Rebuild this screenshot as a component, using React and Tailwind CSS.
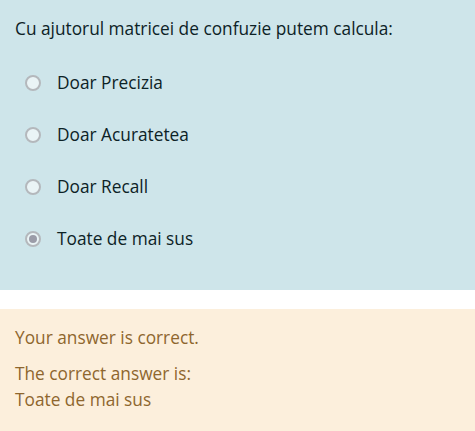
import React from "react";

const options = [
    { label: "Doar Precizia", checked: false },
    { label: "Doar Acuratetea", checked: false },
    { label: "Doar Recall", checked: false },
    { label: "Toate de mai sus", checked: true },
];

const Radio = ({ checked }) => (
    <span className="w-[16px] h-[16px] rounded-full border-2 border-[#b4b8bc] bg-[#eaf4f6] flex items-center justify-center shrink-0">
        {checked && <span className="w-[8px] h-[8px] rounded-full bg-[#9b9ca8]" />}
    </span>
);

const App = () => {
    return (
        <div className="w-[475px] h-[431px] bg-white overflow-hidden font-['Open_Sans',sans-serif] text-[17.3px] leading-[26px]">
            <div className="bg-[#cee5ea] text-[#0c2226] h-[290px] px-[15px] pt-[16px]">
                <div>Cu ajutorul matricei de confuzie putem calcula:</div>
                <div className="mt-[15px] flex flex-col">
                    {options.map((o) => (
                        <label key={o.label} className="h-[52px] flex items-center pl-[10px]">
                            <Radio checked={o.checked} />
                            <span className="ml-[16px]">{o.label}</span>
                        </label>
                    ))}
                </div>
            </div>
            <div className="mt-[19px] bg-[#fcefdc] text-[#8e662e] px-[15px] pt-[16px] pb-[18px]">
                <div>Your answer is correct.</div>
                <div className="mt-[10px]">
                    The correct answer is:
                    <br />
                    Toate de mai sus
                </div>
            </div>
        </div>
    );
};

export default App;
